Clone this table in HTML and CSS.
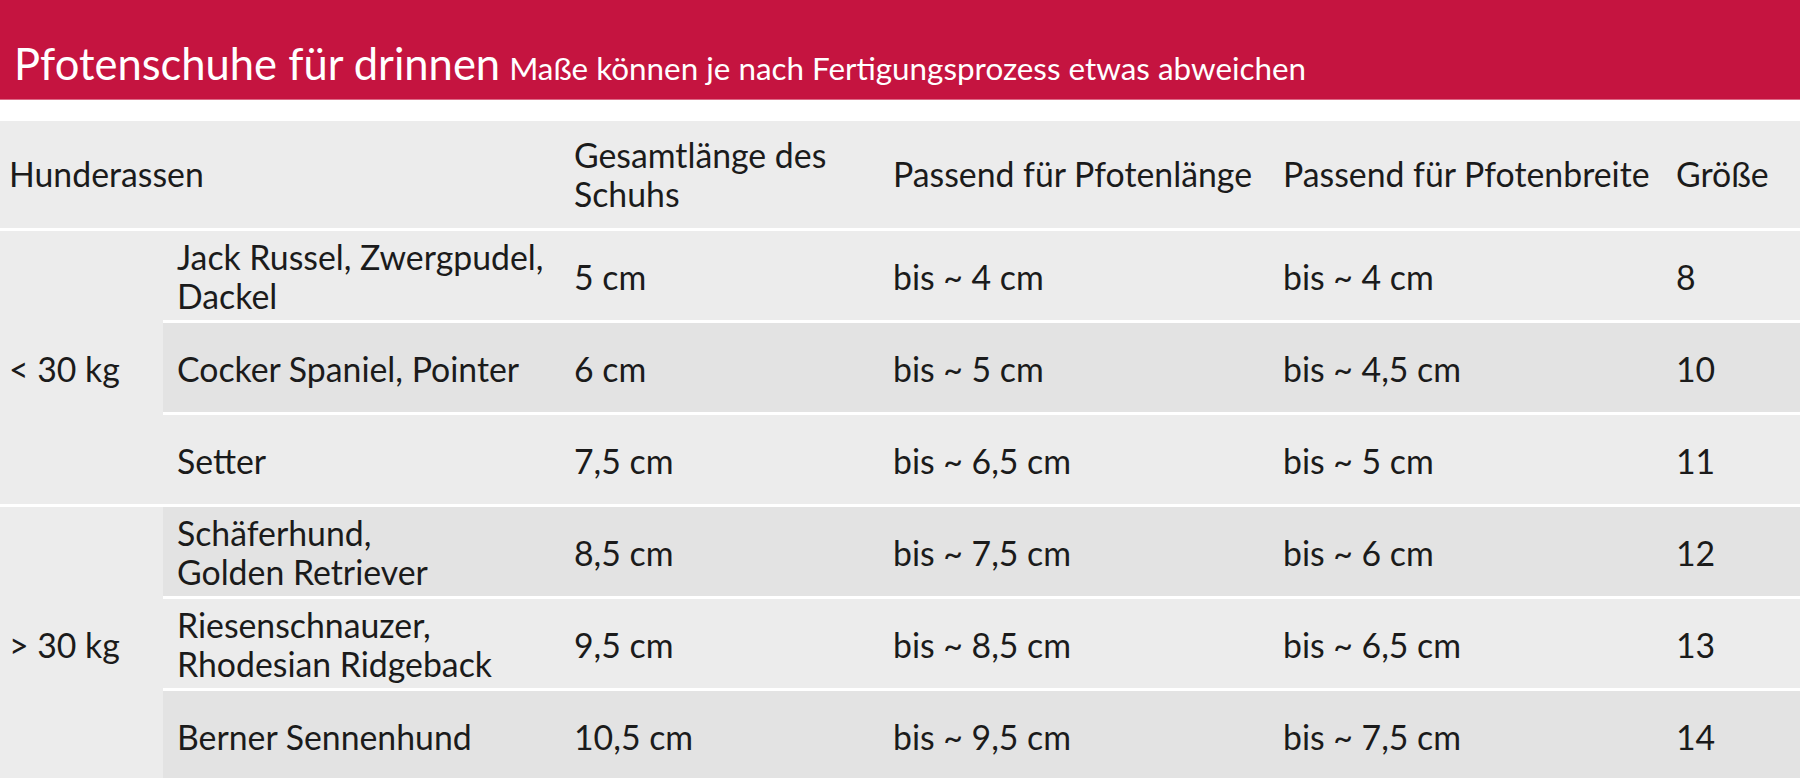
FILE: index.html
```
<!DOCTYPE html>
<html lang="de">
<head>
<meta charset="utf-8">
<title>Pfotenschuhe für drinnen</title>
<link rel="stylesheet" href="styles.css">
</head>
<body>
<header class="banner">
  <h1 class="title">Pfotenschuhe für drinnen</h1>
  <span class="subtitle">Maße können je nach Fertigungsprozess etwas abweichen</span>
</header>
<div class="table">
  <div class="cell head span2 first">Hunderassen</div>
  <div class="cell head">Gesamtlänge des<br>Schuhs</div>
  <div class="cell head">Passend für Pfotenlänge</div>
  <div class="cell head">Passend für Pfotenbreite</div>
  <div class="cell head">Größe</div>

  <div class="cell weight first">&lt; 30 kg</div>
  <div class="cell light">Jack Russel, Zwergpudel,<br>Dackel</div>
  <div class="cell light">5 cm</div>
  <div class="cell light">bis ~ 4 cm</div>
  <div class="cell light">bis ~ 4 cm</div>
  <div class="cell light">8</div>

  <div class="cell dark">Cocker Spaniel, Pointer</div>
  <div class="cell dark">6 cm</div>
  <div class="cell dark">bis ~ 5 cm</div>
  <div class="cell dark">bis ~ 4,5 cm</div>
  <div class="cell dark">10</div>

  <div class="cell light">Setter</div>
  <div class="cell light">7,5 cm</div>
  <div class="cell light">bis ~ 6,5 cm</div>
  <div class="cell light">bis ~ 5 cm</div>
  <div class="cell light">11</div>

  <div class="cell weight first">&gt; 30 kg</div>
  <div class="cell dark">Schäferhund,<br>Golden Retriever</div>
  <div class="cell dark">8,5 cm</div>
  <div class="cell dark">bis ~ 7,5 cm</div>
  <div class="cell dark">bis ~ 6 cm</div>
  <div class="cell dark">12</div>

  <div class="cell light">Riesenschnauzer,<br>Rhodesian Ridgeback</div>
  <div class="cell light">9,5 cm</div>
  <div class="cell light">bis ~ 8,5 cm</div>
  <div class="cell light">bis ~ 6,5 cm</div>
  <div class="cell light">13</div>

  <div class="cell dark">Berner Sennenhund</div>
  <div class="cell dark">10,5 cm</div>
  <div class="cell dark">bis ~ 9,5 cm</div>
  <div class="cell dark">bis ~ 7,5 cm</div>
  <div class="cell dark">14</div>
</div>
</body>
</html>
```
FILE: styles.css
```
* { box-sizing: border-box; }
html, body {
  margin: 0;
  padding: 0;
  background: #ffffff;
  width: 1800px;
  height: 778px;
  overflow: hidden;
  font-family: Lato, "Open Sans", sans-serif;
  color: #1b1b1b;
}
.banner {
  height: 100px;
  background: #c51440;
  border-bottom: 1px solid #dc6a86;
  display: flex;
  align-items: baseline;
  padding: 38px 0 0 14px;
  color: #ffffff;
  margin-bottom: 21px;
}
.title {
  margin: 0;
  font-weight: 400;
  font-size: 43.5px;
  line-height: 50px;
}
.subtitle {
  margin-left: 9px;
  font-size: 31.4px;
  line-height: 50px;
}
.table {
  display: grid;
  grid-template-columns: 163px 397px 319px 390px 393px 138px;
  grid-template-rows: 107px repeat(6, 92px);
  font-size: 33.8px;
  line-height: 39px;
}
.cell {
  display: flex;
  align-items: center;
  padding: 3px 0 0 14px;
  border-top: 3px solid #ffffff;
  background: #ececec;
}
.head {
  border-top: 0;
  padding-top: 0;
}
.span2 { grid-column: span 2; }
.first { padding-left: 9px; }
.weight { grid-row: span 3; background: #ececec; }
.light { background: #ececec; }
.dark { background: #e3e3e3; }
```
